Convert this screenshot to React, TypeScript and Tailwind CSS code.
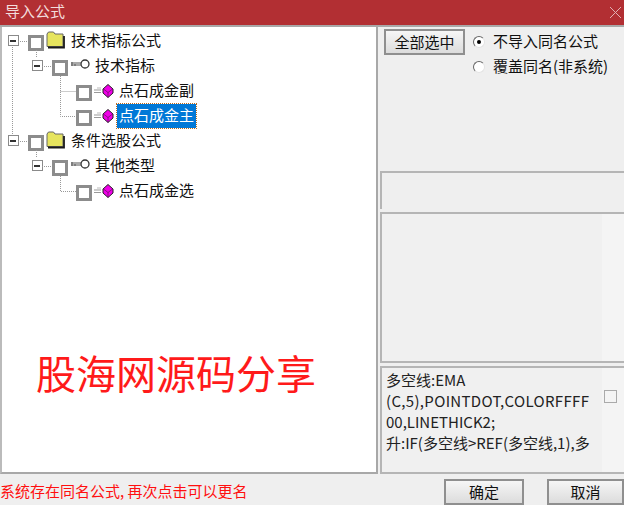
const font = { fontFamily: '"Noto Sans CJK SC", "Liberation Sans", sans-serif' };

type Kind = 'folder' | 'key' | 'formula';

interface TreeRow {
  label: string;
  level: number;
  kind: Kind;
  expander?: boolean;
  selected?: boolean;
}

const rows: TreeRow[] = [
  { label: '技术指标公式', level: 0, kind: 'folder', expander: true },
  { label: '技术指标', level: 1, kind: 'key', expander: true },
  { label: '点石成金副', level: 2, kind: 'formula' },
  { label: '点石成金主', level: 2, kind: 'formula', selected: true },
  { label: '条件选股公式', level: 0, kind: 'folder', expander: true },
  { label: '其他类型', level: 1, kind: 'key', expander: true },
  { label: '点石成金选', level: 2, kind: 'formula' },
];

function Folder() {
  return (
    <svg width="20" height="18" viewBox="0 0 20 18" className="shrink-0 -mt-[2px]">
      <path d="M1 15.5V3L2.5 1h5L9 3h8v12.5z" fill="#e6e45e" stroke="#666" strokeWidth="1" />
      <path d="M2 16.5h16V5" fill="none" stroke="#1a1a1a" strokeWidth="1.8" />
    </svg>
  );
}

function Key() {
  return (
    <svg width="20" height="12" viewBox="0 0 20 12" className="shrink-0 -mt-[4px]">
      <circle cx="15" cy="6" r="4" fill="#fff" stroke="#333" strokeWidth="1.3" />
      <path d="M1 5h10M1 7h10" stroke="#555" strokeWidth="1" />
      <path d="M2 4v4M5 6v2" stroke="#555" strokeWidth="1" />
    </svg>
  );
}

function Formula() {
  return (
    <svg width="20" height="14" viewBox="0 0 20 14" className="shrink-0">
      <path d="M0 6h7M0 8.5h7" stroke="#999" strokeWidth="1" />
      <path d="M3 4h4" stroke="#bbb" strokeWidth="1" />
      <path d="M14 0.5l5 4.5v4l-5 4.5-5-4.5V5z" fill="#f000e8" stroke="#222" strokeWidth="1" />
      <path d="M9.5 5l4.5 3.5L18.5 5M14 8.5v5" fill="none" stroke="#60105c" strokeWidth="0.7" />
    </svg>
  );
}

function Row({ row }: { row: TreeRow }) {
  const indent = ['pl-[4px]', 'pl-[28px]', 'pl-[52px]'][row.level];
  return (
    <div className={`flex items-center h-[25px] ${indent}`}>
      <div className="w-[14px] h-[14px] shrink-0 flex items-center justify-center">
        {row.expander && (
          <div className="w-[11px] h-[11px] border-[1.5px] border-[#8a8a8a] bg-white flex items-center justify-center">
            <div className="w-[6px] h-[2px] bg-[#333]" />
          </div>
        )}
      </div>
      <div className="w-[8px] shrink-0" />
      <div className="w-[16px] h-[16px] border-[3px] border-[#8c8c8c] bg-white shrink-0 mt-[4px]" />
      <div className="w-[2px] shrink-0" />
      {row.kind === 'folder' && <Folder />}
      {row.kind === 'key' && <Key />}
      {row.kind === 'formula' && <Formula />}
      <span
        className={`ml-[3px] text-[15px] leading-[21px] px-[2px] h-[24px] whitespace-nowrap ${
          row.selected ? 'bg-[#0078d7] text-white outline-1 outline-dotted outline-[#b86a20]' : 'text-[#111]'
        }`}
      >
        {row.label}
      </span>
    </div>
  );
}

function Connectors() {
  return (
    <svg width="100" height="190" className="absolute left-0 top-0 pointer-events-none">
      <g stroke="#999" strokeWidth="1" strokeDasharray="1 1" fill="none">
        <path d="M16 14.5H26M10.5 20V108" />
        <path d="M34.5 23V31M40 39.5H50M58.5 49V89.5H74M58.5 64.5H74" />
        <path d="M16 114.5H26M34.5 123V131M40 139.5H50M58.5 149V164.5H74" />
      </g>
    </svg>
  );
}

function Radio({ checked }: { checked?: boolean }) {
  return (
    <span className="w-[12px] h-[12px] rounded-full bg-white border border-[#e4e4e4] border-t-[#666] border-l-[#666] shrink-0 flex items-center justify-center">
      {checked && <span className="w-[4px] h-[4px] rounded-full bg-black" />}
    </span>
  );
}

function DialogButton({ label, className }: { label: string; className: string }) {
  return (
    <button className={`border-2 border-[#8f8f8f] bg-gradient-to-b from-[#f6f6f6] to-[#dcdcdc] text-[15px] text-[#111] flex items-center justify-center ${className}`}>
      {label}
    </button>
  );
}

export default function App() {
  return (
    <div className="w-[624px] h-[505px] overflow-hidden bg-[#efefef] flex flex-col" style={font}>
      <div className="h-[25px] bg-[#b22f33] shrink-0 flex items-center justify-between pl-[5px] pr-[2px] pb-[3px] text-[15px] text-[#f2dcdc]">
        <span>导入公式</span>
        <svg width="13" height="13" viewBox="0 0 13 13" className="mt-[2px]">
          <path d="M1 1l11 11M12 1L1 12" stroke="#e0b0b2" strokeWidth="1" />
        </svg>
      </div>

      <div className="flex h-[449px] shrink-0 border-t-2 border-[#a8a8a8]">
        <div className="relative w-[378px] shrink-0 bg-white border-x-2 border-b-2 border-[#a8a8a8] border-l-[#bbb]">
          <Connectors />
          <div className="pt-[1px]">
            {rows.map(row => (
              <Row key={row.label} row={row} />
            ))}
          </div>
          <div className="ml-[34px] mt-[144px] text-[40px] leading-[50px] text-[#ff1a1a] whitespace-nowrap">股海网源码分享</div>
        </div>

        <div className="flex-1 flex flex-col pl-[2px] min-w-0">
          <div className="h-[144px] shrink-0 flex items-start pl-[4px] pt-[2px] gap-[5px]">
            <DialogButton label="全部选中" className="w-[81px] h-[26px]" />
            <div className="flex flex-col text-[15px] text-[#111] pl-[3px]">
              <label className="flex items-center gap-[8px] h-[25px]"><Radio checked />不导入同名公式</label>
              <label className="flex items-center gap-[8px] h-[25px]"><Radio />覆盖同名(非系统)</label>
            </div>
          </div>
          <div className="h-[38px] shrink-0 border-2 border-b-0 border-r-0 border-[#b5b5b5] bg-[#efefef]" />
          <div className="h-[151px] mt-[3px] shrink-0 border-2 border-r-0 border-[#b5b5b5] bg-[#f4f4f4]">
            <div className="w-[220px] h-full bg-[#f0f0f0]" />
          </div>
          <div className="flex-1 mt-[3px] border-2 border-r-0 border-[#b5b5b5] bg-[#f4f4f4] flex">
            <div className="w-[220px] shrink-0 bg-[#f0f0f0] px-[4px] pt-[1px] text-[15px] leading-[21px] text-[#222] whitespace-nowrap">
              多空线:EMA
              <br />
              <span className="tracking-[0.33px]">(C,5),POINTDOT,COLORFFFF</span>
              <br />
              00,LINETHICK2;
              <br />
              升:IF(多空线&gt;REF(多空线,1),多
            </div>
            <div className="w-[13px] h-[13px] border border-[#aaa] bg-[#f4f4f4] mt-[22px] ml-[2px]" />
          </div>
        </div>
      </div>

      <div className="flex-1 flex items-end relative">
        <span className="absolute left-0 top-[7px] text-[15px] leading-[20px] text-[#ff1010] whitespace-nowrap">系统存在同名公式, 再次点击可以更名</span>
        <DialogButton label="确定" className="ml-[444px] w-[80px] h-[26px]" />
        <DialogButton label="取消" className="ml-[23px] w-[77px] h-[26px]" />
      </div>
    </div>
  );
}
